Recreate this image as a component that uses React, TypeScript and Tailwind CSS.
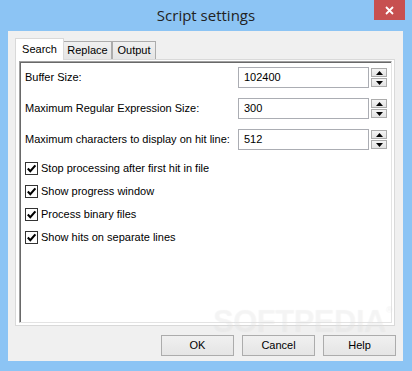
import React from "react";

function SpinBtn({ up }: { up?: boolean }) {
  return (
    <div className="flex h-[9px] w-full items-center justify-center border border-[#acacac] bg-linear-to-b from-[#f4f4f4] to-[#e3e3e3]">
      <svg width="7" height="4" viewBox="0 0 7 4">
        {up ? (
          <polygon points="0,4 7,4 3.5,0" fill="#000" />
        ) : (
          <polygon points="0,0 7,0 3.5,4" fill="#000" />
        )}
      </svg>
    </div>
  );
}

function NumRow({ label, value }: { label: string; value: string }) {
  return (
    <div className="flex h-[21px] items-center">
      <div className="flex-1 text-[11px] text-black">{label}</div>
      <div className="flex h-[21px] w-[131px] items-center border border-[#abadb3] bg-white pl-[5px] text-[11px] text-black">
        {value}
      </div>
      <div className="ml-[2px] flex h-[19px] w-[16px] flex-col justify-between">
        <SpinBtn up />
        <SpinBtn />
      </div>
    </div>
  );
}

function Check({ label }: { label: string }) {
  return (
    <div className="flex h-[13px] items-center gap-[3px]">
      <div className="flex h-[13px] w-[13px] items-center justify-center border border-[#333333] bg-white">
        <svg width="11" height="11" viewBox="0 0 11 11">
          <path d="M1.8 5.6 L4.3 8.2 L9.4 2.4" stroke="#000" strokeWidth="2.1" fill="none" />
        </svg>
      </div>
      <div className="text-[11px] leading-[13px] text-black">{label}</div>
    </div>
  );
}

function Btn({ label }: { label: string }) {
  return (
    <div className="flex h-[21px] w-[73px] items-center justify-center border border-[#acacac] bg-linear-to-b from-[#f0f0f0] to-[#e5e5e5] text-[11px] text-black">
      {label}
    </div>
  );
}

export default function App() {
  return (
    <div className="relative h-[371px] w-[412px] overflow-hidden bg-[#8cc4f4] font-['Liberation_Sans',Arial,sans-serif]">
      {/* Title bar */}
      <div className="relative flex h-[31px] items-center justify-center">
        <div className="pb-[1px] font-['Open_Sans',sans-serif] text-[15px] text-[#222]">Script settings</div>
        <div className="absolute right-[7px] top-0 flex h-[20px] w-[31px] items-center justify-center bg-[#c75050]">
          <svg width="9" height="9" viewBox="0 0 9 9">
            <path d="M1 1 L8 8 M8 1 L1 8" stroke="#fff" strokeWidth="1.8" />
          </svg>
        </div>
      </div>

      {/* Client area */}
      <div className="mx-[8px] flex h-[330px] w-[395px] flex-col bg-[#f0f0f0] pl-[7px] pr-[7px] pt-[7px]">
        {/* Tabs */}
        <div className="flex h-[21px] items-end">
          <div className="relative z-10 -mb-px flex h-[22px] w-[49px] items-center justify-center border border-b-0 border-[#d9d9d9] bg-white text-[11px] text-black">
            Search
          </div>
          <div className="flex h-[18px] w-[48px] items-center justify-center border border-b-0 border-l-0 border-[#acacac] bg-linear-to-b from-[#f0f0f0] to-[#e5e5e5] text-[11px] text-black">
            Replace
          </div>
          <div className="flex h-[18px] w-[44px] items-center justify-center border border-b-0 border-[#acacac] bg-linear-to-b from-[#f0f0f0] to-[#e5e5e5] text-[11px] text-black">
            Output
          </div>
        </div>

        {/* Tab panel */}
        <div className="flex h-[267px] w-[380px] flex-col border border-[#d9d9d9] bg-white pb-[2px] pl-[3px] pr-[2px] pt-[1px]">
          <div className="flex flex-1 flex-col border border-b-[#e3e3e3] border-l-[#a0a0a0] border-r-[#e3e3e3] border-t-[#a0a0a0] bg-white pl-[5px] pr-[4px] pt-[5px] shadow-[inset_1px_1px_0_#696969]">
            <div className="flex flex-col gap-[10px]">
              <NumRow label="Buffer Size:" value="102400" />
              <NumRow label="Maximum Regular Expression Size:" value="300" />
              <NumRow label="Maximum characters to display on hit line:" value="512" />
            </div>
            <div className="mt-[12px] flex flex-col gap-[10px]">
              <Check label="Stop processing after first hit in file" />
              <Check label="Show progress window" />
              <Check label="Process binary files" />
              <Check label="Show hits on separate lines" />
            </div>
          </div>
        </div>

        {/* Buttons */}
        <div className="mt-[9px] flex justify-end gap-[8px]">
          <Btn label="OK" />
          <Btn label="Cancel" />
          <Btn label="Help" />
        </div>
      </div>

      {/* Watermark */}
      <div className="pointer-events-none absolute left-[213px] top-[304px] select-none text-[31px] font-bold leading-[36px] tracking-[-0.5px] text-white/30 [text-shadow:0_0_1px_rgba(0,0,0,0.06)]">
        SOFTPEDIA<span className="align-top text-[9px] leading-[12px]">®</span>
      </div>
    </div>
  );
}
